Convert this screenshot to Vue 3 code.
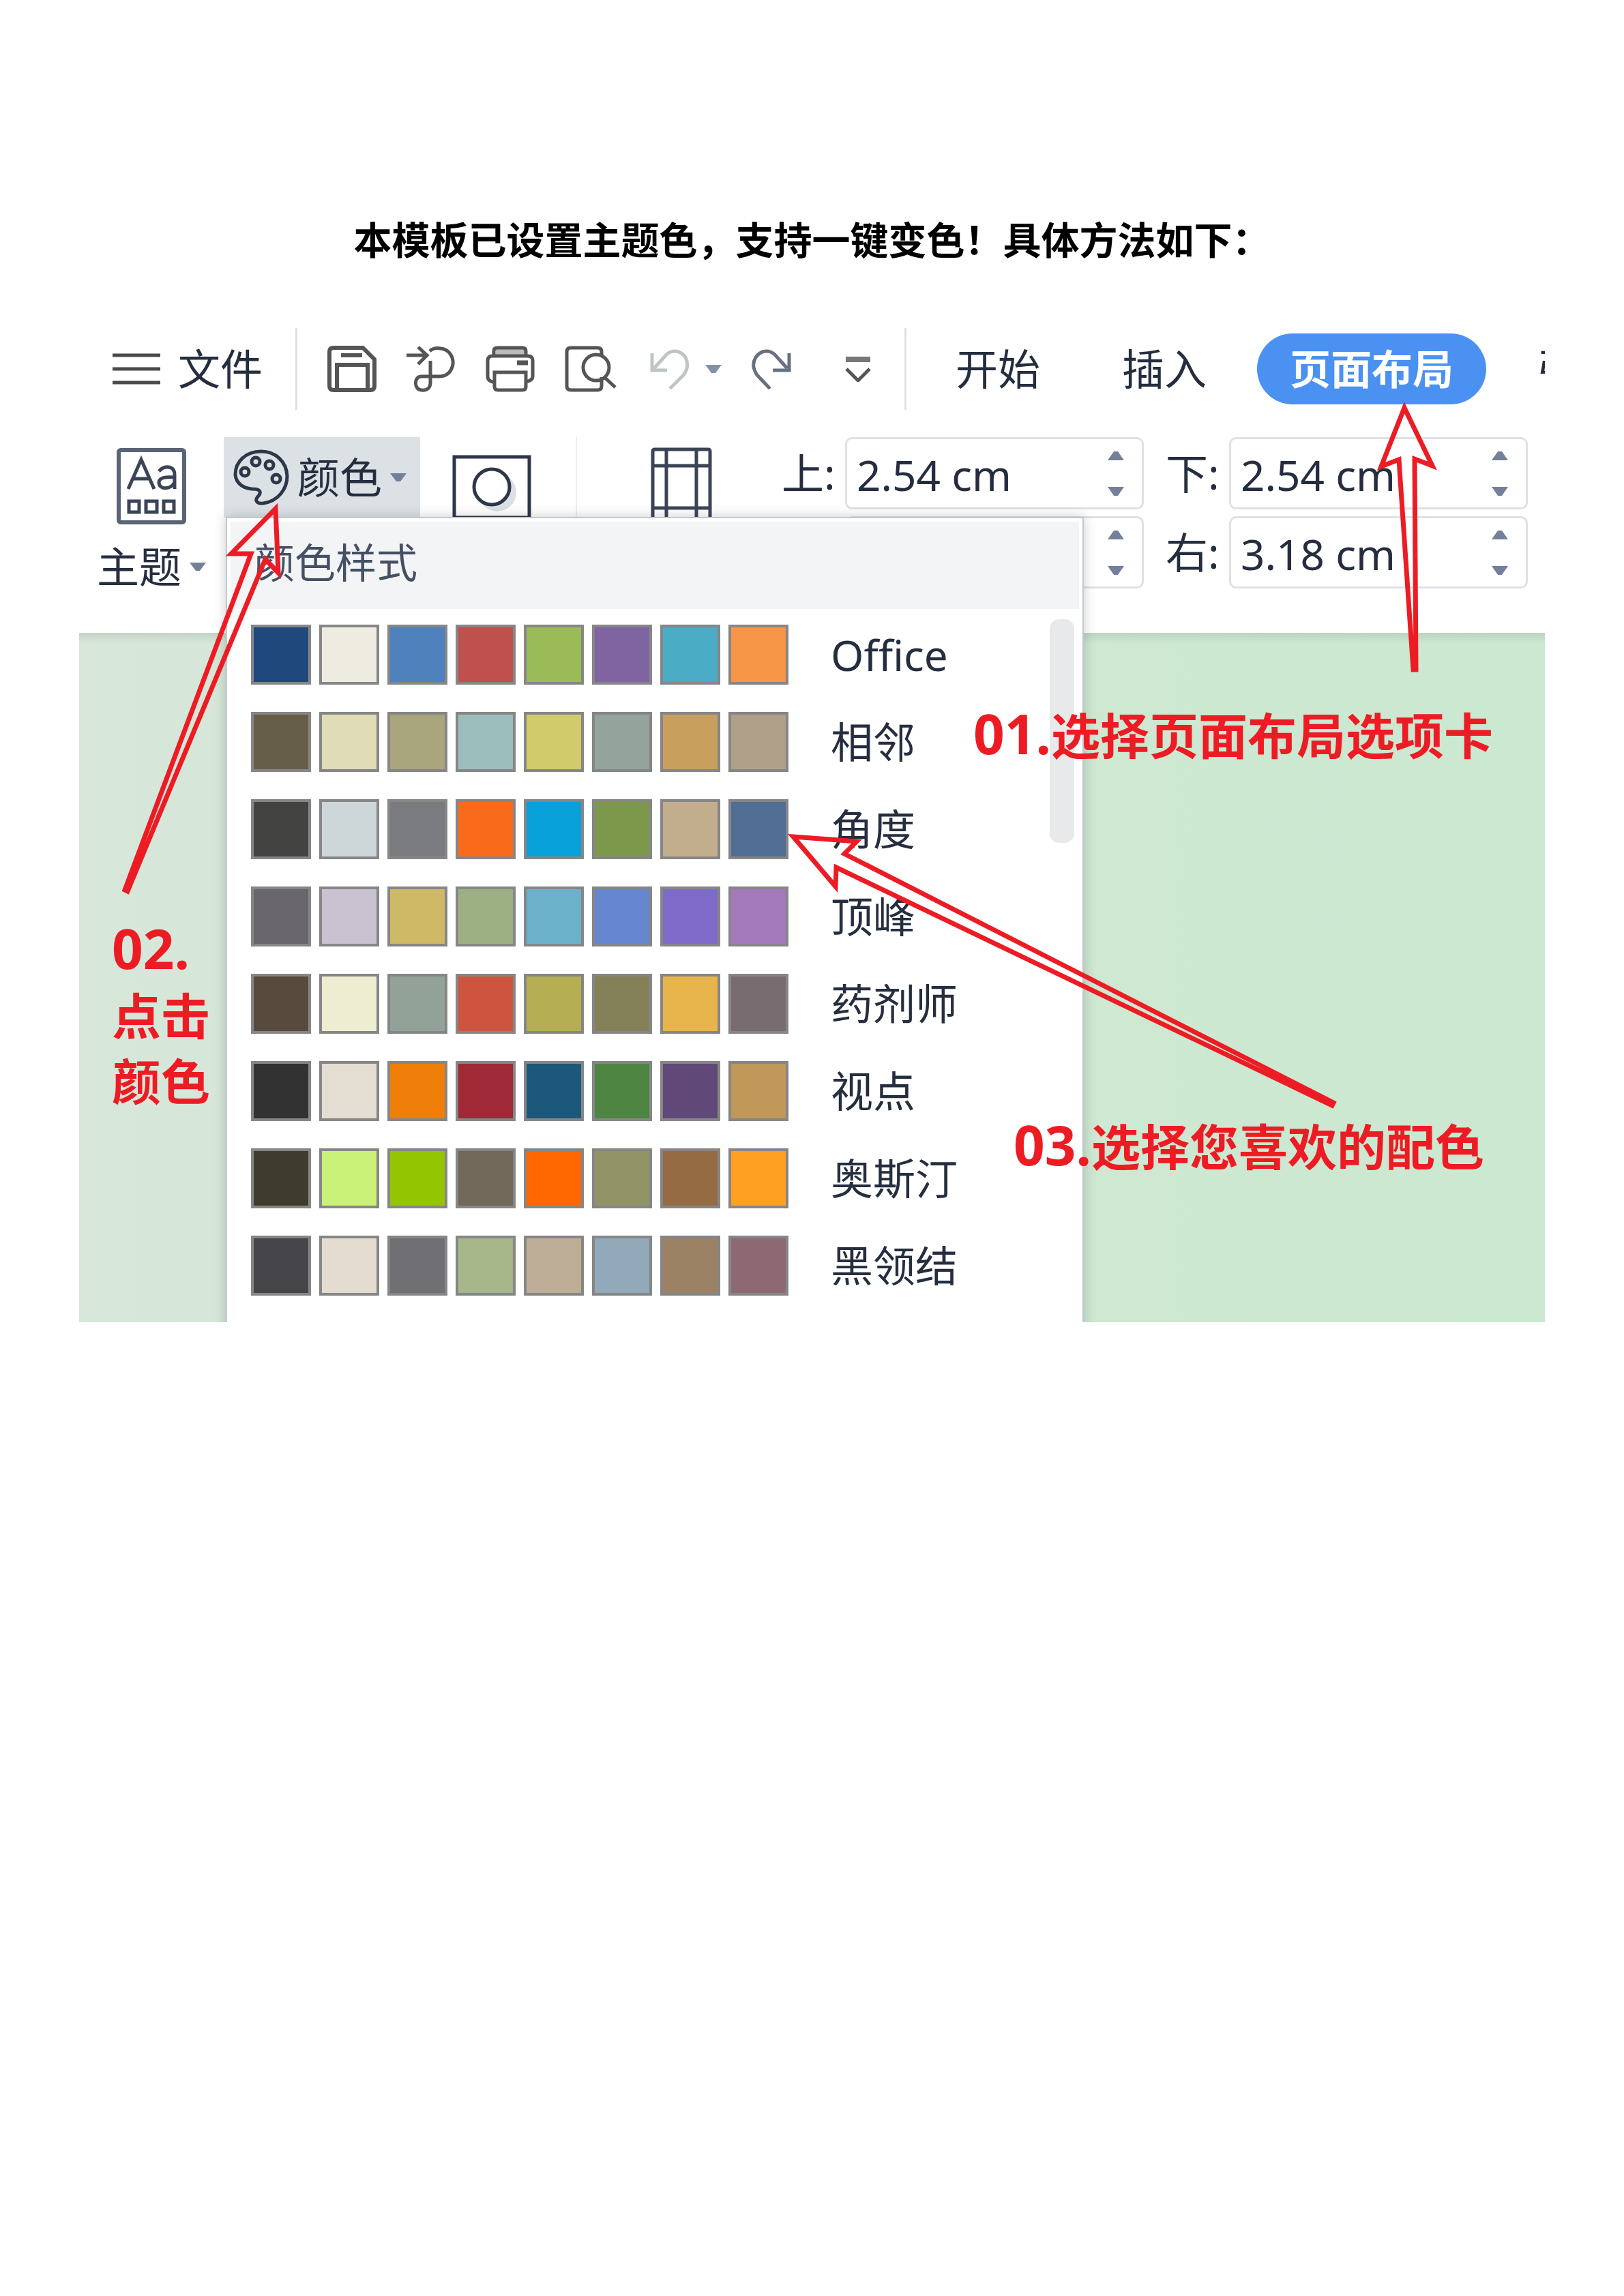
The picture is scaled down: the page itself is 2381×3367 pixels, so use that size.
<script setup>
import { ref } from 'vue'

const margins = ref([
  { id: 'top', label: '上:', value: '2.54 cm' },
  { id: 'bottom', label: '下:', value: '2.54 cm' },
  { id: 'left', label: '左:', value: '3.18 cm' },
  { id: 'right', label: '右:', value: '3.18 cm' },
])

const tabs = ['开始', '插入', '页面布局', '引用']
const activeTab = ref('页面布局')

const schemes = [
  { name: 'Office', colors: ['#1f497d', '#eeece1', '#4f81bd', '#c0504d', '#9bbb59', '#8064a2', '#4bacc6', '#f79646'] },
  { name: '相邻', colors: ['#675e47', '#dfdcb7', '#a9a57c', '#9cbebd', '#d2cb6c', '#95a39d', '#c89f5d', '#b1a089'] },
  { name: '角度', colors: ['#434342', '#cdd7d9', '#797b7e', '#f96a1b', '#08a1d9', '#7c984a', '#c2ad8d', '#506e94'] },
  { name: '顶峰', colors: ['#69676d', '#c9c2d1', '#ceb966', '#9cb084', '#6bb1c9', '#6585cf', '#7e6bc9', '#a379bb'] },
  { name: '药剂师', colors: ['#564b3c', '#ecedd1', '#93a299', '#cf543f', '#b5ae53', '#848058', '#e8b54d', '#786c71'] },
  { name: '视点', colors: ['#323232', '#e3ded1', '#f07f09', '#9f2936', '#1b587c', '#4e8542', '#604878', '#c19859'] },
  { name: '奥斯汀', colors: ['#3e3d2d', '#caf278', '#94c600', '#71685a', '#ff6700', '#909465', '#956b43', '#fea022'] },
  { name: '黑领结', colors: ['#46464a', '#e3dccf', '#6f6f74', '#a7b789', '#beae98', '#92a9b9', '#9c8265', '#8d6974'] },
]
</script>

<template>
  <main class="page">
    <h1 class="title">本模板已设置主题色，支持一键变色！具体方法如下：</h1>

    <section class="figure">
      <header class="topbar">
        <button class="file">
          <svg width="70" height="46" viewBox="0 0 70 46" fill="none" stroke="#4a4a4a" stroke-width="5">
            <path d="M0 3H70M0 23H70M0 43H70" />
          </svg>
          <span>文件</span>
        </button>
        <i class="rule"></i>
        <div class="quick">
          <button aria-label="保存">
            <svg width="72" height="68" viewBox="0 0 72 68" fill="none" stroke="#555" stroke-width="6">
              <path d="M9 3H52L69 20V59Q69 65 63 65H9Q3 65 3 59V9Q3 3 9 3ZM14 64V28H59V64M20 14H51" />
            </svg>
          </button>
          <button aria-label="输出">
            <svg width="72" height="68" viewBox="0 0 72 68" fill="none" stroke="#555" stroke-width="5">
              <path d="M34 8Q40 2 50 4C62 5 69 16 68 27C66 39 58 45 48 45H22C10 45 11 65 22 65C30 66 35 62 35 54V22M0 14H28M17 2L30 14L17 27" />
            </svg>
          </button>
          <button aria-label="打印">
            <svg width="72" height="68" viewBox="0 0 72 68" fill="none" stroke="#555" stroke-width="5">
              <path d="M15 9H57" stroke="#bbb" stroke-width="8" />
              <path d="M12 15V8Q12 3 17 3H54Q59 3 59 8V15M13 53H10Q3 51 3 45V22Q3 15 10 15H62Q69 15 69 22V45Q69 51 59 53M13 39H59V60Q59 65 54 65H18Q13 65 13 60Z" />
              <path d="M46 25H62" stroke-width="7" />
            </svg>
          </button>
          <button aria-label="打印预览">
            <svg width="76" height="68" viewBox="0 0 76 68" fill="none" stroke="#555" stroke-width="5">
              <path d="M54 15V9Q54 3 48 3H9Q3 3 3 9V59Q3 65 9 65H48Q54 65 54 59V46" />
              <circle cx="46" cy="32" r="19" />
              <path d="M58 46L74 61" />
            </svg>
          </button>
          <div class="undo">
            <button aria-label="撤销">
              <svg width="64" height="60" viewBox="0 0 64 60" fill="none" stroke="#bfc5c5" stroke-width="5">
                <path d="M8 7V32H30M11 29L29 9C38 1 50 3 57 13C62 23 60 31 54 39L34 59" />
              </svg>
            </button>
            <button aria-label="撤销列表">
              <svg width="24" height="13" viewBox="0 0 24 13" fill="#8490a8"><path d="M0 0H24L15 12H9Z" /></svg>
            </button>
          </div>
          <button aria-label="恢复">
            <svg width="60" height="60" viewBox="0 0 60 60" fill="none" stroke="#687080" stroke-width="5">
              <path d="M55 7V32H31M52 29L34 9C25 1 13 3 6 13C0 23 3 31 8 39L27 59" />
            </svg>
          </button>
          <button aria-label="自定义">
            <svg width="72" height="38" viewBox="0 0 72 38" fill="none" stroke="#555">
              <path d="M34 5H70" stroke-width="8" stroke="#777" />
              <path d="M35 19L52 36L69 19" stroke-width="5" />
            </svg>
          </button>
        </div>
        <i class="rule second"></i>
        <nav class="tabs">
          <button
            v-for="tab in tabs"
            :key="tab"
            class="tab"
            :class="{ active: tab === activeTab }"
            @click="activeTab = tab"
          >{{ tab }}</button>
        </nav>
      </header>

      <div class="ribbon">
        <button class="theme">
          <svg width="102" height="112" viewBox="0 0 102 112" fill="none" stroke="#3b4456" stroke-width="5">
            <rect x="3" y="3" width="96" height="106" rx="3" stroke="#5b6475" stroke-width="6" />
            <path d="M17 60L36 17L55 60M24 45H49" />
            <path d="M62 34Q68 27 76 28Q85 29 85 39V60M85 43C72 42 62 43 62 51C63 62 80 61 85 50" />
            <path d="M18 78H33V94H18ZM43 78H59V94H43ZM69 78H84V94H69Z" />
          </svg>
          <span class="theme-label">
            主题
            <svg width="24" height="13" viewBox="0 0 24 13" fill="#74809a"><path d="M0 0H24L15 12H9Z" /></svg>
          </span>
        </button>

        <button class="color">
          <svg width="82" height="82" viewBox="0 0 82 82" fill="none" stroke="#2e3748" stroke-width="5">
            <path d="M41 3C18 3 3 18 3 37C4 50 15 57 27 58C36 58 42 60 38 67C29 76 36 80 44 79C66 76 79 58 79 39C78 18 62 3 41 3Z" />
            <circle cx="17" cy="33" r="6" />
            <circle cx="33" cy="18" r="6" />
            <circle cx="53" cy="23" r="6" />
            <circle cx="63" cy="43" r="6" />
          </svg>
          <span>颜色</span>
          <svg width="24" height="13" viewBox="0 0 24 13" fill="#74809a"><path d="M0 0H24L15 12H9Z" /></svg>
        </button>

        <button class="effect" aria-label="效果">
          <svg width="116" height="96" viewBox="0 0 116 96" fill="none" stroke="#2e3748" stroke-width="5">
            <path d="M3 3H113V92H3Z" />
            <circle cx="66" cy="55" r="28" fill="#dcdfe5" stroke="none" />
            <circle cx="58" cy="47" r="26" fill="#fff" />
          </svg>
        </button>

        <i class="ribbon-rule"></i>

        <button class="page-margin" aria-label="页边距">
          <svg width="90" height="112" viewBox="0 0 90 112" fill="none" stroke="#3b4456" stroke-width="5">
            <path d="M3 112V6Q3 3 6 3H84Q87 3 87 6V112M23 3V112M67 3V112M3 27H87M3 89H87" />
          </svg>
        </button>

        <form class="fields" @submit.prevent>
          <div v-for="m in margins" :key="m.id" class="field">
            <label :for="m.id">{{ m.label }}</label>
            <div class="spin">
              <input :id="m.id" v-model="m.value" type="text" />
              <div class="steps">
                <button type="button" aria-label="增加">
                  <svg width="24" height="13" viewBox="0 0 24 13" fill="#74809a"><path d="M0 13H24L15 0H9Z" /></svg>
                </button>
                <button type="button" aria-label="减少">
                  <svg width="24" height="13" viewBox="0 0 24 13" fill="#74809a"><path d="M0 0H24L15 13H9Z" /></svg>
                </button>
              </div>
            </div>
          </div>
        </form>
      </div>

      <div class="canvas"></div>

      <div class="menu">
        <h2 class="menu-head">颜色样式</h2>
        <div class="menu-body">
          <ul class="schemes">
            <li v-for="s in schemes" :key="s.name">
              <button class="scheme">
                <span class="swatches">
                  <i v-for="c in s.colors" :key="c" :style="{ background: c }"></i>
                </span>
                <span>{{ s.name }}</span>
              </button>
            </li>
          </ul>
          <div class="scrollbar"></div>
        </div>
      </div>

      <svg class="arrows" width="2149" height="1459" viewBox="116 480 2149 1459" fill="none" stroke="#ed1c24" stroke-width="7">
        <path d="M2059 598L2025 684L2051 674L2072 982H2076L2074 673L2100 683Z" />
        <path d="M404 746L339 812H368L183 1305L187 1307L389 820L408 840Z" />
        <path d="M1163 1227L1256 1234L1238 1252L1955 1617L1953 1621L1226 1272L1225 1300Z" />
      </svg>
      <p class="note one"><span>01.</span>选择页面布局选项卡</p>
      <p class="note two"><span>02.</span><br />点击<br />颜色</p>
      <p class="note three"><span>03.</span>选择您喜欢的配色</p>
    </section>
  </main>
</template>

<style>
body {
  margin: 0;
  background: #fff;
}
</style>

<style scoped>
.page {
  padding: 311px 116px 0;
  font-family: "Noto Sans", "Noto Sans CJK SC", sans-serif;
  font-size: 62px;
  line-height: 80px;
  color: #252e3f;
}

button {
  display: flex;
  align-items: center;
  flex: none;
  padding: 0;
  border: 0;
  background: none;
  font: inherit;
  color: inherit;
  white-space: nowrap;
}

svg {
  display: block;
  flex: none;
}

.title {
  margin: 0 0 89px;
  font-size: 56px;
  font-weight: 700;
  line-height: 80px;
  text-align: center;
  color: #000;
}

.figure {
  position: relative;
  overflow: hidden;
}

.topbar {
  display: flex;
  align-items: center;
  height: 122px;
  padding-left: 49px;
}

.file {
  gap: 26px;
}

.rule {
  flex: none;
  width: 3px;
  height: 120px;
  margin: 0 44px 0 48px;
  background: #dfe1e8;
}

.rule.second {
  margin: 0 26px 0 48px;
}

.quick {
  display: flex;
  align-items: center;
  flex: none;
  gap: 44px;
}

.undo {
  display: flex;
  align-items: center;
  gap: 22px;
}

.tabs {
  display: flex;
  flex: none;
  gap: 28px;
}

.tab {
  height: 104px;
  padding: 0 46px;
  border-radius: 52px;
}

.tab.active {
  padding: 0 48px;
  background: #4a91f2;
  color: #fff;
  font-size: 60px;
  font-weight: 700;
}

.ribbon {
  display: flex;
  align-items: flex-start;
  height: 287px;
  padding: 39px 24px 0 26px;
}

.theme {
  flex-direction: column;
  gap: 22px;
  margin: 16px 26px 0 0;
}

.theme-label {
  display: flex;
  align-items: center;
  gap: 12px;
}

.color {
  gap: 12px;
  width: 288px;
  height: 118px;
  padding: 0 14px;
  box-sizing: border-box;
  background: #dce1e5;
}

.effect {
  margin: 26px 65px 0 47px;
}

.ribbon-rule {
  flex: none;
  width: 2px;
  height: 232px;
  margin-right: 108px;
  background: #eeeff2;
}

.page-margin {
  margin: 15px 102px 0 0;
}

.fields {
  display: grid;
  grid-template-columns: 531px 531px;
  gap: 10px 32px;
}

.field {
  display: flex;
  align-items: center;
}

.field label {
  flex: 1;
}

.spin {
  display: flex;
  align-items: center;
  width: 438px;
  height: 106px;
  padding: 0 26px 0 14px;
  box-sizing: border-box;
  border: 3px solid #dfe1e6;
  border-radius: 10px;
  background: #fff;
}

.spin input {
  flex: 1;
  min-width: 0;
  padding: 4px 0 0;
  border: 0;
  outline: 0;
  background: none;
  font: inherit;
  color: inherit;
}

.steps {
  display: flex;
  flex-direction: column;
  gap: 39px;
}

.canvas {
  height: 1011px;
  background:
    linear-gradient(rgba(60, 80, 60, 0.12), rgba(60, 80, 60, 0) 16px),
    linear-gradient(90deg, #d7e7da, #cfe8d2 60%, #cbe8d1);
}

.menu {
  position: absolute;
  left: 215px;
  top: 278px;
  bottom: -20px;
  width: 1258px;
  padding: 5px;
  box-sizing: border-box;
  border: 2px solid #c3c8cc;
  background: #fff;
  box-shadow: 0 0 16px rgba(40, 50, 60, 0.25);
}

.menu-head {
  margin: 0;
  padding: 20px 34px 28px;
  font-size: 60px;
  font-weight: 400;
  line-height: 80px;
  background: #f3f4f6;
  color: #465064;
}

.menu-body {
  display: flex;
  justify-content: space-between;
  align-items: flex-start;
  padding: 15px 7px 0 30px;
}

.schemes {
  display: flex;
  flex-direction: column;
  gap: 40px;
  margin: 0;
  padding: 8px 0 0;
  list-style: none;
}

.scheme {
  gap: 62px;
  height: 88px;
}

.swatches {
  display: flex;
  gap: 12px;
}

.swatches i {
  width: 88px;
  height: 88px;
  box-sizing: border-box;
  border: 4px solid #868686;
}

.scrollbar {
  width: 36px;
  height: 328px;
  border-radius: 14px;
  background: #e8e9eb;
}

.arrows {
  position: absolute;
  left: 0;
  top: 0;
}

.note {
  position: absolute;
  margin: 0;
  font-size: 72px;
  font-weight: 700;
  line-height: 96px;
  white-space: nowrap;
  color: #ed1c24;
}

.note span {
  font-size: 80px;
}

.one {
  left: 1311px;
  top: 547px;
}

.two {
  left: 48px;
  top: 862px;
}

.three {
  left: 1370px;
  top: 1150px;
}
</style>
